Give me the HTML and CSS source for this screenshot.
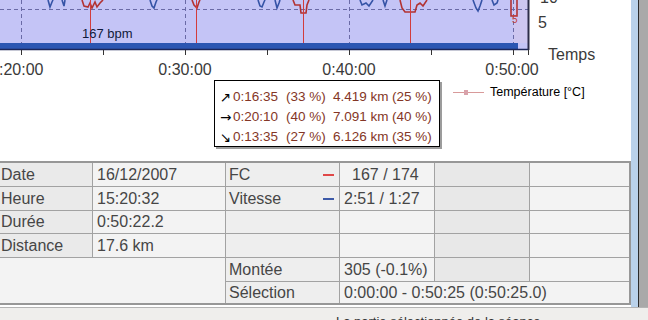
FILE: index.html
```html
<!DOCTYPE html>
<html lang="fr">
<head>
<meta charset="utf-8">
<title>Séance</title>
<link rel="stylesheet" href="styles.css">
</head>
<body>
<div class="app">
  <div class="main">
    <div class="chart">
      <svg class="plot" width="631" height="161" viewBox="0 0 631 161">
        <rect x="0" y="0" width="528" height="50" fill="#c4c4f6"/>
        <rect x="513" y="0" width="15" height="43" fill="#cdc6f0"/>
        <line class="grid" x1="0" y1="9.5" x2="528" y2="9.5"/>
        <line class="grid" x1="21.5" y1="0" x2="21.5" y2="43"/>
        <line class="grid" x1="185.5" y1="0" x2="185.5" y2="43"/>
        <line class="grid" x1="349.5" y1="0" x2="349.5" y2="43"/>
        <line class="grid" x1="513.5" y1="0" x2="513.5" y2="43"/>
        <g class="blue">
          <polyline points="48,0 50,7 52,2 53,0"/>
          <polyline points="62,0 64,6 65,0"/>
          <polyline points="150,0 152,6 154,8 156,2 157,0"/>
          <polyline points="258,0 260,6 262,7 264,2 265,0"/>
          <polyline points="275,0 277,8 279,3 280,0"/>
          <polyline points="360,0 362,5 366,3 369,6 373,0"/>
          <polyline points="383,0 385,6 387,0"/>
          <polyline points="473,0 476,8 478,11 480,6 482,0"/>
          <polyline points="492,0 494,5 497,3 498,0"/>
        </g>
        <g class="red">
          <polyline points="82,0 84,6 88,7 90,3 92,8 95,2 97,7 100,3 103,0"/>
          <polyline points="192,0 194,5 197,8 199,2 200,0"/>
          <polyline points="293,0 295,5 300,5 301,13 306,13 307,5 309,0"/>
          <polyline points="400,0 402,8 405,12 415,12 417,5 420,3 423,6 427,0"/>
          <polyline points="511,0 511,16 517,16 517,0"/>
        </g>
        <text x="512" y="23" class="small-red">5</text>
        <g class="marker">
          <line x1="90.5" y1="0" x2="90.5" y2="43"/>
          <line x1="196.5" y1="0" x2="196.5" y2="43"/>
          <line x1="303.5" y1="0" x2="303.5" y2="43"/>
          <line x1="410.5" y1="0" x2="410.5" y2="43"/>
        </g>
        <text x="82" y="38" class="bpm">167 bpm</text>
        <rect x="0" y="43" width="518" height="6" fill="#2b56b2"/>
        <line x1="0" y1="49.5" x2="529" y2="49.5" stroke="#1c2658" stroke-width="1.5"/>
        <line x1="528.5" y1="0" x2="528.5" y2="50" stroke="#2c2c48" stroke-width="2"/>
        <g class="tick">
          <line x1="21.5" y1="50" x2="21.5" y2="55"/>
          <line x1="103.5" y1="50" x2="103.5" y2="55"/>
          <line x1="185.5" y1="50" x2="185.5" y2="55"/>
          <line x1="267.5" y1="50" x2="267.5" y2="55"/>
          <line x1="349.5" y1="50" x2="349.5" y2="55"/>
          <line x1="431.5" y1="50" x2="431.5" y2="55"/>
          <line x1="513.5" y1="50" x2="513.5" y2="55"/>
          <line x1="528.5" y1="50" x2="528.5" y2="55"/>
        </g>
        <text x="-1" y="75" class="axis">:20:00</text>
        <text x="185" y="75" class="axis" text-anchor="middle">0:30:00</text>
        <text x="349" y="75" class="axis" text-anchor="middle">0:40:00</text>
        <text x="512" y="75" class="axis" text-anchor="middle">0:50:00</text>
        <text x="540" y="3" class="axis">10</text>
        <text x="538" y="28" class="axis">5</text>
        <text x="548" y="60" class="axis">Temps</text>
      </svg>
      <div class="tip">
        <div class="tip-row"><span class="arr">↗</span><span>0:16:35</span><span>(33 %)</span><span>4.419 km</span><span>(25 %)</span></div>
        <div class="tip-row"><span class="arr">→</span><span>0:20:10</span><span>(40 %)</span><span>7.091 km</span><span>(40 %)</span></div>
        <div class="tip-row"><span class="arr">↘</span><span>0:13:35</span><span>(27 %)</span><span>6.126 km</span><span>(35 %)</span></div>
      </div>
      <div class="legend">
        <svg class="swatch" width="31" height="9" viewBox="0 0 31 9">
          <line x1="0" y1="4.5" x2="31" y2="4.5" stroke="#d89a9a" stroke-width="1"/>
          <rect x="11" y="2" width="4" height="5" fill="#d8a2aa"/>
        </svg>
        <span>Température [°C]</span>
      </div>
    </div>
    <div class="info">
      <div class="lab">Date</div>
      <div>16/12/2007</div>
      <div class="mid"><span>FC</span><span class="dash dash-red"></span></div>
      <div class="ctr">167 / 174</div>
      <div class="dk"></div>
      <div></div>

      <div class="lab">Heure</div>
      <div>15:20:32</div>
      <div class="mid"><span>Vitesse</span><span class="dash dash-blue"></span></div>
      <div>2:51 / 1:27</div>
      <div class="dk"></div>
      <div></div>

      <div class="lab">Durée</div>
      <div>0:50:22.2</div>
      <div class="mid"></div>
      <div></div>
      <div class="dk"></div>
      <div></div>

      <div class="lab">Distance</div>
      <div>17.6 km</div>
      <div class="mid"></div>
      <div></div>
      <div class="dk"></div>
      <div></div>

      <div class="merged"></div>
      <div class="mid">Montée</div>
      <div>305 (-0.1%)</div>
      <div class="dk"></div>
      <div></div>

      <div class="mid">Sélection</div>
      <div class="wide">0:00:00 - 0:50:25 (0:50:25.0)</div>
    </div>
  </div>
  <div class="scroll">
    <div class="scroll-track"></div>
    <div class="scroll-edge"></div>
  </div>
</div>
<div class="status">La partie sélectionnée de la séance</div>
</body>
</html>
```
FILE: styles.css
```css
html, body {
  margin: 0;
  padding: 0;
}
body {
  width: 648px;
  height: 320px;
  overflow: hidden;
  background: #ffffff;
  font-family: "Liberation Sans", Arial, sans-serif;
}
.app {
  display: flex;
  height: 307px;
}
.main {
  width: 631px;
  flex: none;
  display: flex;
  flex-direction: column;
  overflow: hidden;
}
.chart {
  position: relative;
  height: 161px;
  flex: none;
}
.plot {
  display: block;
}
.grid {
  stroke: #6a6aa6;
  stroke-width: 1;
  stroke-dasharray: 4 3;
}
.blue polyline {
  fill: none;
  stroke: #3553a6;
  stroke-width: 1.6;
}
.red polyline {
  fill: none;
  stroke: #b23232;
  stroke-width: 1.6;
}
.marker line {
  stroke: #d23c3c;
  stroke-width: 1;
}
.tick line {
  stroke: #333333;
  stroke-width: 1;
}
.axis {
  font-family: "Liberation Sans", Arial, sans-serif;
  font-size: 16px;
  fill: #3a3a3a;
}
.bpm {
  font-family: "Liberation Sans", Arial, sans-serif;
  font-size: 13px;
  fill: #101a3a;
}
.small-red {
  font-family: "Liberation Sans", Arial, sans-serif;
  font-size: 10px;
  fill: #c04040;
}
.tip {
  position: absolute;
  left: 214px;
  top: 80px;
  width: 226px;
  height: 67px;
  box-sizing: border-box;
  border: 1px solid #000000;
  background: #ffffff;
  box-shadow: 2px 2px 0 #9c9c9c;
  padding: 6px 0 0 5px;
  font-size: 13.5px;
  color: #843626;
}
.tip-row {
  display: grid;
  grid-template-columns: 13px 53px 47px 59px auto;
  height: 20px;
  line-height: 20px;
  white-space: nowrap;
}
.arr {
  font-family: "DejaVu Sans", sans-serif;
  font-size: 13.5px;
  color: #000000;
  overflow: hidden;
}
.legend {
  position: absolute;
  left: 453px;
  top: 85px;
  display: flex;
  align-items: center;
  gap: 6px;
  font-size: 12.5px;
  color: #000000;
}
.swatch {
  display: block;
}
.info {
  display: grid;
  grid-template-columns: 92px 132px 113px 94px 94px 99px;
  grid-template-rows: 23px 23px 22px 23px 23px 21px;
  gap: 1px;
  width: max-content;
  margin-left: -2px;
  background: #a2a2a2;
  border: 2px solid #979797;
  font-size: 16px;
  color: #464646;
  flex: none;
}
.info > div {
  display: flex;
  align-items: center;
  background: #f3f3f3;
  padding-left: 4px;
  white-space: nowrap;
  overflow: hidden;
}
.info > .lab {
  background: #eaeaea;
  padding-left: 1px;
}
.info > .mid {
  background: #eeeeee;
  padding-left: 3px;
  padding-right: 5px;
  justify-content: space-between;
}
.info > .dk {
  background: #e8e8e8;
}
.info > .ctr {
  padding-left: 12px;
}
.info > .merged {
  grid-column: 1 / 3;
  grid-row: 5 / 7;
}
.info > .wide {
  grid-column: 4 / 7;
}
.dash {
  display: block;
  width: 11px;
  height: 2px;
}
.dash-red {
  background: #e04848;
}
.dash-blue {
  background: #3d5aa8;
}
.scroll {
  display: flex;
  flex: none;
}
.scroll-track {
  width: 7px;
  background: #bad2ea;
  border-right: 1px solid #2c2c2c;
}
.scroll-edge {
  width: 9px;
  background: #a9a9a9;
}
.status {
  height: 13px;
  box-sizing: border-box;
  border-top: 1px solid #b4b4b4;
  background: #efeeec;
  padding: 6px 0 0 336px;
  font-size: 13px;
  line-height: 15px;
  color: #333333;
  overflow: hidden;
  white-space: nowrap;
}
```
